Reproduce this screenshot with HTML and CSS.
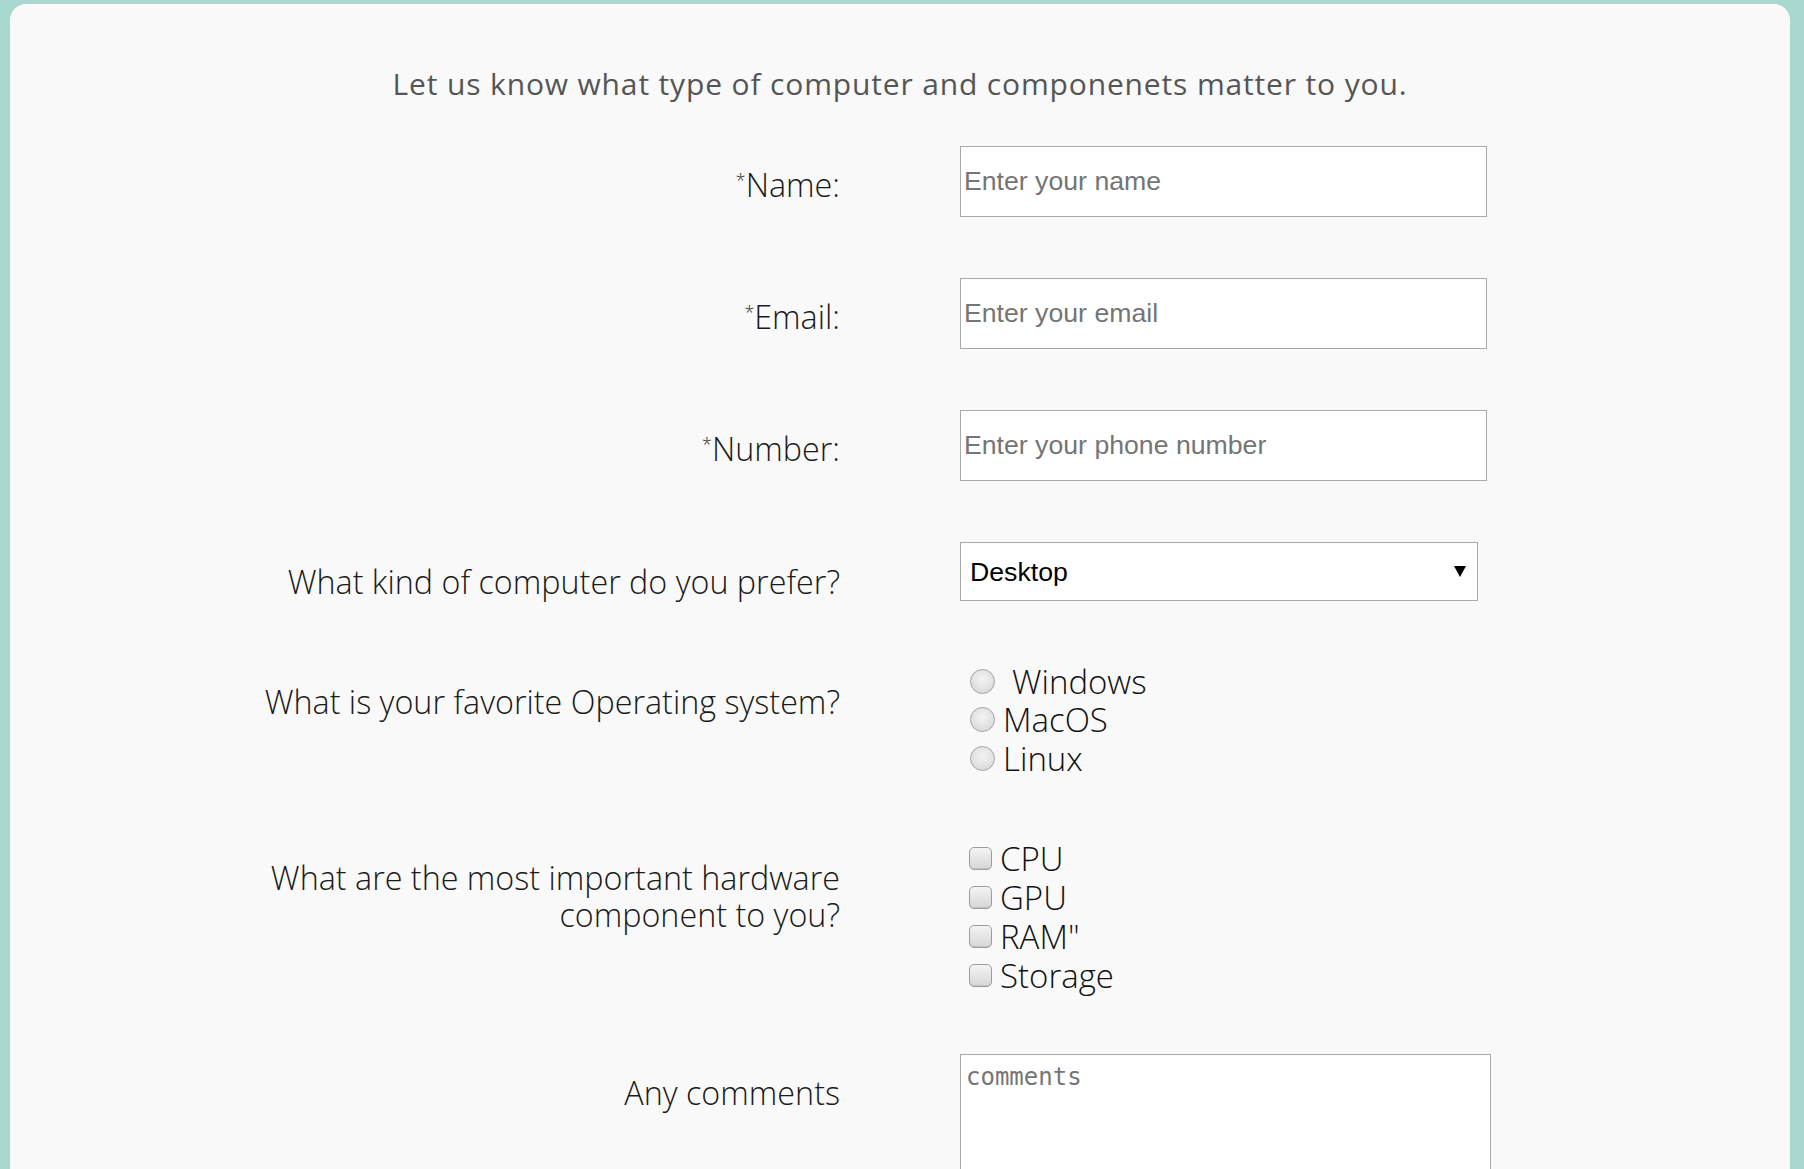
FILE: index.html
```html
<!DOCTYPE html>
<html lang="en">
<head>
<meta charset="utf-8">
<title>Survey</title>
<link rel="stylesheet" href="styles.css">
</head>
<body>
<div class="card">
  <p class="intro">Let us know what type of computer and componenets matter to you.</p>
  <form class="form">
    <div class="row">
      <label class="lbl lbl-field" for="name"><span class="req">*</span>Name:</label>
      <input class="field" id="name" type="text" placeholder="Enter your name">
    </div>
    <div class="row">
      <label class="lbl lbl-field" for="email"><span class="req">*</span>Email:</label>
      <input class="field" id="email" type="email" placeholder="Enter your email">
    </div>
    <div class="row">
      <label class="lbl lbl-field" for="number"><span class="req">*</span>Number:</label>
      <input class="field" id="number" type="tel" placeholder="Enter your phone number">
    </div>
    <div class="row">
      <label class="lbl lbl-kind" for="kind">What kind of computer do you prefer?</label>
      <div class="select-wrap">
        <select class="select" id="kind">
          <option>Desktop</option>
          <option>Laptop</option>
        </select>
      </div>
    </div>
    <div class="row row-top">
      <div class="lbl lbl-radio">What is your favorite Operating system?</div>
      <div class="options">
        <label class="opt opt-radio"><input class="radio" type="radio" name="os"><span class="lead">Windows</span></label>
        <label class="opt opt-radio"><input class="radio" type="radio" name="os"><span>MacOS</span></label>
        <label class="opt opt-radio"><input class="radio" type="radio" name="os"><span>Linux</span></label>
      </div>
    </div>
    <div class="row row-top">
      <div class="lbl lbl-check">What are the most important hardware<br>component to you?</div>
      <div class="options">
        <label class="opt opt-check"><input class="check" type="checkbox"><span>CPU</span></label>
        <label class="opt opt-check"><input class="check" type="checkbox"><span>GPU</span></label>
        <label class="opt opt-check"><input class="check" type="checkbox"><span>RAM"</span></label>
        <label class="opt opt-check"><input class="check" type="checkbox"><span>Storage</span></label>
      </div>
    </div>
    <div class="row row-top row-comments">
      <label class="lbl lbl-comments" for="comments">Any comments</label>
      <textarea class="area" id="comments" placeholder="comments"></textarea>
    </div>
  </form>
</div>
</body>
</html>
```

FILE: styles.css
```css
html {
  overflow: hidden;
}

body {
  margin: 0;
  background: #a9d8d1;
  font-family: "Open Sans", "Lato", sans-serif;
}

.card {
  margin: 4px 14px 0 10px;
  background: #f9f9f9;
  border-radius: 16px 16px 0 0;
  padding: 60px 0 60px;
  min-height: 1200px;
  box-sizing: border-box;
}

.intro {
  margin: 0;
  text-align: center;
  font-size: 30px;
  line-height: 40px;
  font-weight: 400;
  letter-spacing: 0.85px;
  color: #555;
}

.form {
  margin-top: 42px;
  display: flex;
  flex-direction: column;
  gap: 61px;
}

.row {
  display: grid;
  grid-template-columns: 830px 1fr;
  column-gap: 120px;
  align-items: center;
}

.row-top {
  align-items: start;
}

.row-comments {
  margin-top: -2px;
}

.lbl {
  text-align: right;
  font-size: 32.3px;
  line-height: 38px;
  font-weight: 300;
  color: #1a1a1a;
}

.req {
  font-size: 0.55em;
  vertical-align: 0.55em;
  line-height: 0;
}

.lbl-field {
  margin-top: 5px;
}

.lbl-kind {
  margin-top: 18px;
}

.lbl-radio {
  margin-top: 20px;
}

.lbl-check {
  margin-top: 20px;
  line-height: 37px;
}

.lbl-comments {
  margin-top: 19px;
}

.field {
  width: 527px;
  height: 71px;
  box-sizing: border-box;
  margin: 0;
  border: 1px solid #a9a9a9;
  border-radius: 0;
  background: #fff;
  padding: 0 3px;
  font-family: "Liberation Sans", Arial, sans-serif;
  font-size: 26.67px;
  color: #000;
}

.field::placeholder,
.area::placeholder {
  color: #757575;
  opacity: 1;
}

.select-wrap {
  position: relative;
  width: 518px;
}

.select-wrap::after {
  content: "";
  position: absolute;
  right: 12px;
  top: 24px;
  border-left: 6px solid transparent;
  border-right: 6px solid transparent;
  border-top: 11px solid #000;
}

.select {
  appearance: none;
  -webkit-appearance: none;
  display: block;
  width: 518px;
  height: 59px;
  box-sizing: border-box;
  margin: 0;
  border: 1px solid #a9a9a9;
  border-radius: 0;
  background: #fff;
  padding: 0 40px 0 9px;
  font-family: "Liberation Sans", Arial, sans-serif;
  font-size: 26.67px;
  color: #000;
}

.options {
  display: flex;
  flex-direction: column;
}

.opt {
  display: flex;
  align-items: center;
  font-size: 33px;
  font-weight: 300;
  color: #111;
}

.opt-radio {
  height: 38.5px;
}

.opt-check {
  height: 39.1px;
}

.radio {
  appearance: none;
  -webkit-appearance: none;
  width: 25px;
  height: 25px;
  box-sizing: border-box;
  margin: 0 8px 0 10px;
  border: 1px solid #a3a3a3;
  border-radius: 50%;
  background: radial-gradient(circle at 50% 40%, #f3f3f3 0%, #e2e2e2 55%, #d2d2d2 100%);
  flex: none;
}

.lead {
  padding-left: 9px;
}

.check {
  appearance: none;
  -webkit-appearance: none;
  width: 23px;
  height: 23px;
  box-sizing: border-box;
  margin: 0 8px 0 9px;
  border: 1px solid #9c9c9c;
  border-radius: 5px;
  background: linear-gradient(#f4f4f4, #d6d6d6);
  box-shadow: inset 0 -1px 0 #c4c4c4;
  flex: none;
}

.area {
  display: block;
  width: 531px;
  height: 170px;
  box-sizing: border-box;
  margin: 0;
  border: 1px solid #a9a9a9;
  border-radius: 0;
  background: #fff;
  padding: 8px 5px 4px;
  font-family: "DejaVu Sans Mono", "Liberation Mono", monospace;
  font-size: 24px;
  resize: none;
}
```
